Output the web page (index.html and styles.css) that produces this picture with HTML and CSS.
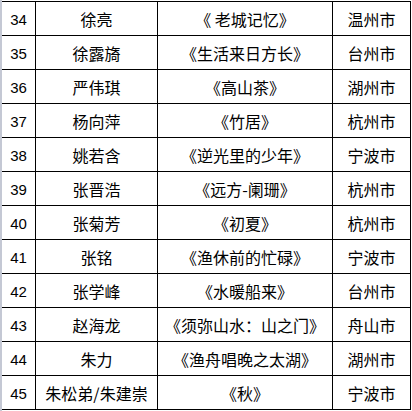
FILE: index.html
```html
<!DOCTYPE html>
<html lang="zh">
<head>
<meta charset="utf-8">
<link rel="stylesheet" href="styles.css">
</head>
<body>
<div class="page">
  <div class="edge"></div>
  <div class="grid">
    <div class="c num">34</div><div class="c">徐亮</div><div class="c">《 老城记忆》</div><div class="c">温州市</div>
    <div class="c num">35</div><div class="c">徐露旖</div><div class="c">《生活来日方长》</div><div class="c">台州市</div>
    <div class="c num">36</div><div class="c">严伟琪</div><div class="c">《高山茶》</div><div class="c">湖州市</div>
    <div class="c num">37</div><div class="c">杨向萍</div><div class="c">《竹居》</div><div class="c">杭州市</div>
    <div class="c num">38</div><div class="c">姚若含</div><div class="c">《逆光里的少年》</div><div class="c">宁波市</div>
    <div class="c num">39</div><div class="c">张晋浩</div><div class="c">《远方-阑珊》</div><div class="c">杭州市</div>
    <div class="c num">40</div><div class="c">张菊芳</div><div class="c">《初夏》</div><div class="c">杭州市</div>
    <div class="c num">41</div><div class="c">张铭</div><div class="c">《渔休前的忙碌》</div><div class="c">宁波市</div>
    <div class="c num">42</div><div class="c">张学峰</div><div class="c">《水暖船来》</div><div class="c">台州市</div>
    <div class="c num">43</div><div class="c">赵海龙</div><div class="c">《须弥山水：山之门》</div><div class="c">舟山市</div>
    <div class="c num">44</div><div class="c">朱力</div><div class="c">《渔舟唱晚之太湖》</div><div class="c">湖州市</div>
    <div class="c num">45</div><div class="c">朱松弟/朱建崇</div><div class="c">《秋》</div><div class="c">宁波市</div>
  </div>
</div>
</body>
</html>
```

FILE: styles.css
```css
html, body {
  margin: 0;
  padding: 0;
  background: #fff;
}
.page {
  display: flex;
  align-items: flex-start;
  width: 412px;
  height: 411px;
  overflow: hidden;
}
.edge {
  width: 2px;
  height: 411px;
  background: #c4c8d4;
  flex: none;
}
.grid {
  margin-top: 1px;
  display: grid;
  grid-template-columns: 33px 121px 174px 77px;
  grid-auto-rows: 33px;
  gap: 1px;
  padding: 1px 1px 1px 0;
  background: #000;
}
.c {
  background: #fff;
  display: flex;
  align-items: center;
  justify-content: center;
  font-family: "Noto Sans CJK SC", "Noto Sans", sans-serif;
  font-size: 16px;
  color: #000;
  white-space: nowrap;
  padding-top: 1px;
}
.num {
  font-family: "Liberation Sans", sans-serif;
  font-size: 15px;
}
```
